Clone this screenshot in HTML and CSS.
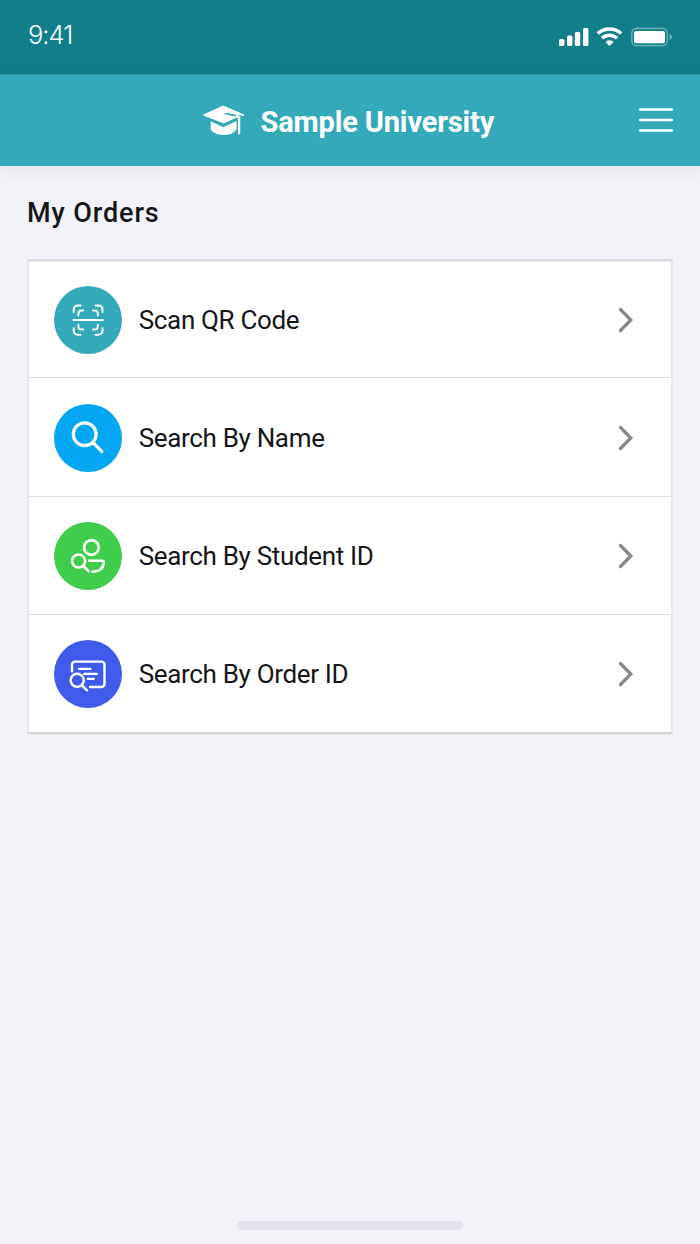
FILE: index.html
```html
<!DOCTYPE html>
<html lang="en">
<head>
<meta charset="utf-8">
<title>Sample University</title>
<link rel="stylesheet" href="styles.css">
</head>
<body>
<div class="status">
  <span class="time">9:41</span>
  <svg class="indicators" width="113" height="20" viewBox="0 0 113 20">
    <g fill="#fff">
      <rect x="0" y="12" width="5.4" height="7" rx="1.5"/>
      <rect x="8" y="8.5" width="5.4" height="10.5" rx="1.5"/>
      <rect x="15.8" y="5" width="5.4" height="14" rx="1.5"/>
      <rect x="24" y="1" width="5.4" height="18" rx="1.5"/>
      <path d="M50.5 19l-4.100-4.100a6 6 0 0 1 8.200 0z"/>
      <rect x="75" y="4" width="31" height="12.200" rx="2"/>
    </g>
    <g fill="none" stroke="#fff" stroke-width="3.500">
      <path d="M38.800 6.500a17.200 17.200 0 0 1 23.400 0"/>
      <path d="M42.900 11.300a11 11 0 0 1 15.200 0"/>
    </g>
    <rect x="72.800" y="1.400" width="35.400" height="17.200" rx="4.600" fill="none" stroke="#fff" stroke-opacity=".35" stroke-width="1.600"/>
    <path d="M110.600 7v6c1.400-.7 2.200-1.700 2.200-3s-.8-2.300-2.200-3z" fill="#fff" fill-opacity=".45"/>
  </svg>
</div>
<header class="header">
  <div class="brand">
    <svg width="42" height="31" viewBox="0 0 42 31">
      <path d="M20.300 .6L41 9.600v1.300l-19-3.100c-.9 0-.9 1.200 0 1.400l12.500 2.900-13.600 6.500L.3 10.400v-.9z" fill="#fff"/>
      <path d="M7.700 16.300l12.600 6 13.200-6.300v8.400C31 28 26.300 30 20.800 30S10 28.200 7.700 24.600z" fill="#fff"/>
      <path d="M33.500 11.200l2.600.8V28.300" stroke="#fff" stroke-width="2.300" fill="none" stroke-linecap="round"/>
    </svg>
    <h1 class="title">Sample University</h1>
  </div>
  <svg class="menu" width="34" height="26" viewBox="0 0 34 26">
    <path d="M1.200 2.500h31.600M1.200 13h31.600M1.200 23.500h31.600" stroke="#fff" stroke-width="2.600" stroke-linecap="round"/>
  </svg>
</header>
<main class="main">
  <h2 class="heading">My Orders</h2>
  <ul class="list">
    <li class="row">
      <svg class="icon scan" viewBox="0 0 68 68">
        <path stroke-width="2" d="M19.700 26v-2.500a4 4 0 0 1 4-4h2.800M41.500 19.500h3a4 4 0 0 1 4 4V26M48.500 42.200v2.500a4 4 0 0 1-4 4h-3M26.500 48.700h-2.800a4 4 0 0 1-4-4v-2.500M24.400 29.600V27.500a3 3 0 0 1 3-3h1.800M39 24.500h1.800a3 3 0 0 1 3 3v2.100M43.800 39v1.600a3 3 0 0 1-3 3H39M29.200 43.600h-1.800a3 3 0 0 1-3-3V39M19.500 34.100h29.300"/>
      </svg>
      <span class="label">Scan QR Code</span>
      <svg class="chevron" viewBox="0 0 16 26"><path d="M2.500 2.500L12.800 13 2.500 23.500"/></svg>
    </li>
    <li class="row">
      <svg class="icon name" viewBox="0 0 68 68">
        <circle cx="30.700" cy="30.200" r="11.400" stroke-width="3.200"/><path stroke-width="3.300" d="M39 38.600l8.800 8.800"/>
      </svg>
      <span class="label">Search By Name</span>
      <svg class="chevron" viewBox="0 0 16 26"><path d="M2.500 2.500L12.800 13 2.500 23.500"/></svg>
    </li>
    <li class="row">
      <svg class="icon student" viewBox="0 0 68 68">
        <g stroke-width="2.600"><circle cx="37.400" cy="25.400" r="7.300"/><circle cx="24.600" cy="39" r="6.500"/>
        <path class="body" d="M29.300 44l6 5.900M34 38.700h13.700c1.600 0 2.300 1 2.100 2.500-.7 6-5 8.600-12.300 8.600"/></g>
      </svg>
      <span class="label">Search By Student ID</span>
      <svg class="chevron" viewBox="0 0 16 26"><path d="M2.500 2.500L12.800 13 2.500 23.500"/></svg>
    </li>
    <li class="row">
      <svg class="icon order" viewBox="0 0 68 68">
        <g stroke-width="2.400"><path d="M18 31.200V24.600a3 3 0 0 1 3-3h26.500a3 3 0 0 1 3 3V44a3 3 0 0 1-3 3H36"/>
        <path d="M25 28.900h11.300M30.500 33.900h12.200M34 38.900h5.700M28 45.300l5 5"/>
        <circle cx="23.200" cy="40.300" r="6.600"/></g>
      </svg>
      <span class="label">Search By Order ID</span>
      <svg class="chevron" viewBox="0 0 16 26"><path d="M2.500 2.500L12.800 13 2.500 23.500"/></svg>
    </li>
  </ul>
</main>
<div class="home"></div>
</body>
</html>
```
FILE: styles.css
```css
* { box-sizing: border-box; }
body {
  margin: 0;
  height: 1244px;
  display: flex;
  flex-direction: column;
  background: #f2f3f8;
  color: #141618;
  font-family: Roboto, sans-serif;
}
.status {
  height: 74px;
  padding: 0 28px;
  display: flex;
  justify-content: space-between;
  background: #117e8a;
  color: #fff;
}
.time {
  margin-top: 19px;
  font: 300 25.500px/32px Inter, sans-serif;
  letter-spacing: -1px;
}
.indicators { margin-top: 27px; }
.header {
  height: 92px;
  padding: 0 27px 0 203px;
  display: flex;
  justify-content: space-between;
  background: #34a9b9;
  border-top: 1px solid #2395a3;
  box-shadow: 0 2px 16px rgba(60, 50, 50, .1);
}
.brand { display: flex; gap: 15.500px; padding-top: 30px; }
.title {
  margin: 0;
  font-size: 29px;
  line-height: 34px;
  font-weight: 700;
  letter-spacing: -.15px;
  white-space: nowrap;
  color: #fff;
}
.menu { margin-top: 32px; }
.main { flex: 1; padding: 30px 27px 0; }
.heading {
  margin: 0 0 29px;
  font-size: 27px;
  line-height: 34px;
  font-weight: 500;
  letter-spacing: .9px;
}
.list {
  margin: 0;
  padding: 0;
  list-style: none;
  background: #fff;
  border: 2px solid #e6e7e9;
  border-top-color: #d9dbdf;
  border-bottom-color: #d2d3d5;
  box-shadow: 0 1px 2px -1px rgba(0, 0, 0, .14), inset 0 1px #e8e8ea;
}
.row {
  height: 118.250px;
  padding: 1.500px 37px 0 25px;
  display: flex;
  align-items: center;
  border-bottom: 1px solid #dcddde;
}
.row:first-child { height: 117.250px; }
.row:last-child { height: 117px; border-bottom: 0; }
.icon {
  width: 68px;
  height: 68px;
  margin-right: 16.700px;
  border-radius: 50%;
  fill: none;
  stroke: #fff;
  stroke-linecap: round;
}
.body { stroke-linecap: butt; }
.scan { background: #34a9b9; }
.name { background: #03a6f0; }
.student { background: #40cd4b; }
.order { background: #405beb; }
.label {
  flex: 1;
  font-size: 26px;
  line-height: 32px;
  letter-spacing: -.33px;
}
.chevron {
  width: 16px;
  height: 26px;
  fill: none;
  stroke: #888;
  stroke-width: 3.300;
  stroke-linecap: round;
}
.home {
  align-self: center;
  width: 226px;
  height: 9px;
  margin-bottom: 14px;
  border-radius: 5px;
  background: #e2e3ef;
}
```
